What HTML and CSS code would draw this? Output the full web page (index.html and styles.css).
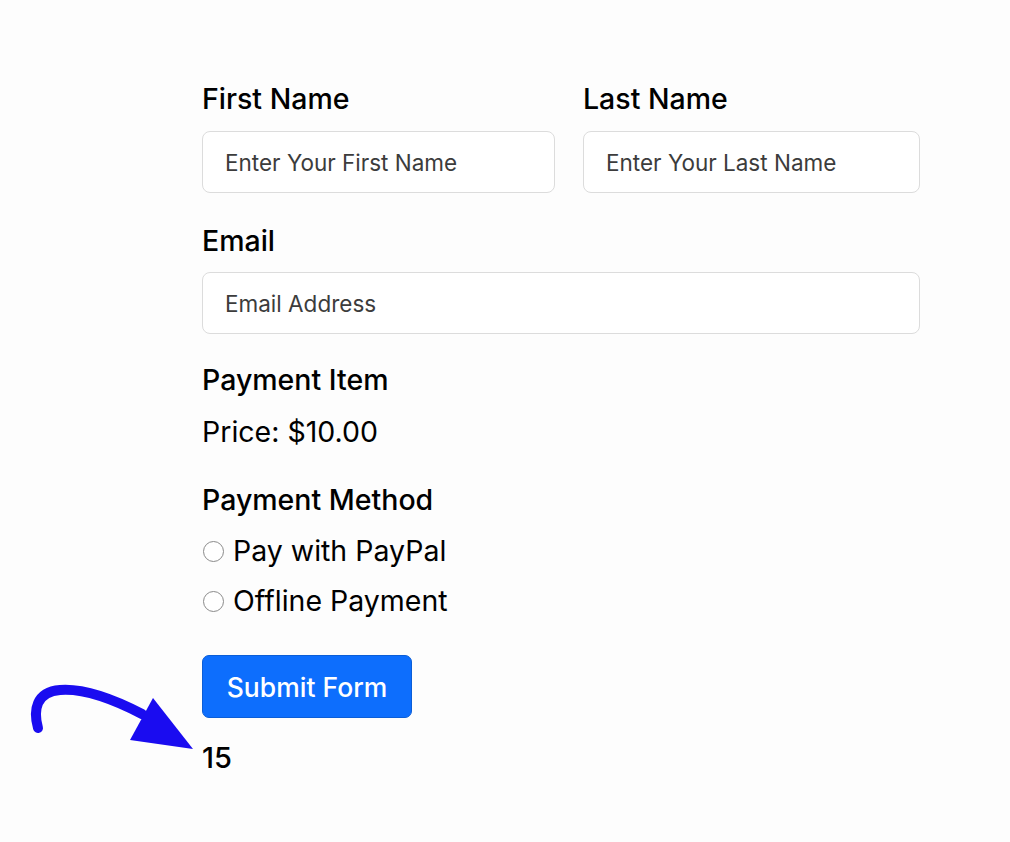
FILE: index.html
```html
<!DOCTYPE html>
<html lang="en">
<head>
<meta charset="utf-8">
<title>Payment Form</title>
<link rel="stylesheet" href="styles.css">
</head>
<body>
<form class="form">
  <div class="row">
    <div class="field">
      <label class="label" for="fn">First Name</label>
      <input class="input" id="fn" type="text" placeholder="Enter Your First Name">
    </div>
    <div class="field">
      <label class="label" for="ln">Last Name</label>
      <input class="input" id="ln" type="text" placeholder="Enter Your Last Name">
    </div>
  </div>
  <div class="field field-email">
    <label class="label" for="em">Email</label>
    <input class="input" id="em" type="email" placeholder="Email Address">
  </div>
  <div class="label item-title">Payment Item</div>
  <div class="price">Price: $10.00</div>
  <div class="label method-title">Payment Method</div>
  <label class="radio-row radio-first"><input class="radio" type="radio" name="pm"><span>Pay with PayPal</span></label>
  <label class="radio-row"><input class="radio" type="radio" name="pm"><span>Offline Payment</span></label>
  <button class="submit" type="button">Submit Form</button>
  <div class="count">15</div>
</form>
<svg class="arrow" width="200" height="90" viewBox="0 0 200 90" xmlns="http://www.w3.org/2000/svg">
  <path d="M38 58 C 33 40, 36 22, 60 20 C 85 18, 115 30, 142 44" fill="none" stroke="#1a0cf0" stroke-width="10" stroke-linecap="round"/>
  <polygon points="153,28 130,70 193,79" fill="#1a0cf0"/>
</svg>
</body>
</html>
```
FILE: styles.css
```css
html, body {
  margin: 0;
  padding: 0;
  background: #fdfdfd;
}
body {
  font-family: Inter, "Noto Sans", "Liberation Sans", sans-serif;
  color: #000;
  position: relative;
  min-height: 842px;
}
.form {
  width: 718px;
  margin-left: 202px;
  padding-top: 81px;
  display: flex;
  flex-direction: column;
}
.row {
  display: grid;
  grid-template-columns: 353px 337px;
  column-gap: 28px;
}
.field {
  display: flex;
  flex-direction: column;
}
.label {
  font-size: 28.5px;
  font-weight: 500;
  line-height: 36px;
  display: block;
}
.field .label {
  margin-bottom: 14px;
}
.input {
  box-sizing: border-box;
  height: 62px;
  width: 100%;
  border: 1px solid #dcdcdc;
  border-radius: 8px;
  background: #fff;
  padding: 0 22px;
  font-family: inherit;
  font-size: 22.5px;
  color: #222;
  outline: none;
}
.input::placeholder {
  color: #3c3c3c;
}
.field-email {
  margin-top: 30px;
}
.field-email .label {
  margin-bottom: 13px;
}
.item-title {
  margin-top: 28px;
}
.price {
  font-size: 28.5px;
  line-height: 36px;
  margin-top: 16px;
}
.method-title {
  margin-top: 32px;
}
.radio-row {
  display: flex;
  align-items: center;
  gap: 9px;
  font-size: 28.5px;
  line-height: 36px;
  margin-top: 14px;
}
.radio-first {
  margin-top: 15px;
}
.radio {
  appearance: none;
  -webkit-appearance: none;
  margin: 0 0 0 1px;
  width: 21px;
  height: 21px;
  border: 1px solid #8a8a8a;
  border-radius: 50%;
  background: #fff;
  flex: none;
}
.submit {
  align-self: flex-start;
  margin-top: 36px;
  width: 210px;
  height: 63px;
  background: #0d6efd;
  border: 1px solid #0b5ed7;
  border-radius: 7px;
  color: #fff;
  font-family: inherit;
  font-size: 26.5px;
  font-weight: 500;
  padding: 0;
}
.count {
  margin-top: 22px;
  font-size: 29px;
  font-weight: 500;
  line-height: 36px;
}
.arrow {
  position: absolute;
  left: 0;
  top: 670px;
}
```
